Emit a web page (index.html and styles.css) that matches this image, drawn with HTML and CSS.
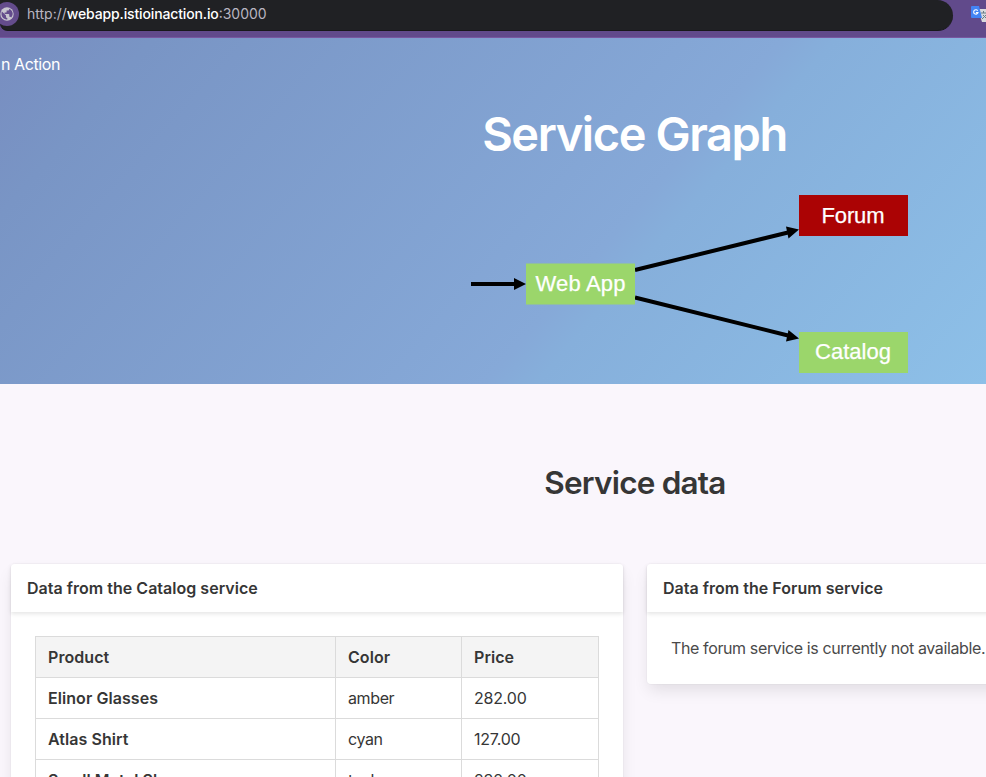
FILE: index.html
```html
<!DOCTYPE html>
<html lang="en">
<head>
<meta charset="utf-8">
<title>Istio in Action</title>
<link rel="stylesheet" href="styles.css">
</head>
<body>
<header class="browser">
  <div class="address">
    <svg class="globe" width="20" height="26" viewBox="0 0 20 26"><circle cx="7" cy="14" r="12" fill="#644c8c"/><circle cx="7" cy="14" r="6.7" fill="#c8c6d0"/><path d="M1.7 11.2 6 15.6v1.2c0 .7.6 1.3 1.3 1.3v1.5C4 19.500 1.500 17 1.500 14zM9.200 8.800v.4c0 .8-.6 1.400-1.300 1.400H6.600v1.300c0 .4-.3.700-.7.700H4.600V14h4c.4 0 .7.300.7.700v2h.6c.6 0 1.100.4 1.300.9 2.700-3.100 1.700-7.100-2-8.800z" fill="#644c8c"/></svg>
    <div class="url">http://<b>webapp.istioinaction.io</b>:30000</div>
  </div>
  <svg class="translate" width="15" height="18" viewBox="0 0 15 18"><path d="M7 4h9v13h-5z" fill="#d9dadd"/><path d="M10 8h6M12.500 6v2M11 14l5-5M12 10l4 4" stroke="#687d87" fill="none"/><path d="M1 1h7l3 12H1Q0 13 0 12V2Q0 1 1 1z" fill="#4384f4"/><path d="M6.700 5.700A2.200 2.200 0 1 0 7 7.600H4.900" stroke="#fff" stroke-width="1.100" fill="none"/></svg>
</header>
<section class="hero">
  <nav class="brand">n Action</nav>
  <h1 class="title">Service Graph</h1>
  <svg class="graph" width="986" height="200" viewBox="0 184 986 200">
    <g stroke="#000" stroke-width="4"><path d="M471 284H516M635 270 788 232.500M635 297.500 788 335.500"/></g>
    <path d="M514 278 526 284 514 290zM786 226.500 799 229.500 788.500 238.500zM788.500 330 799 338.500 786 341.500z"/>
    <path d="M526 263.500h109v41H526zM799 332h109v41H799z" fill="#9bd66b"/>
    <path d="M799 195h109v41H799z" fill="#ab0304"/>
    <g class="labels">
      <text x="535.500" y="291" textLength="90">Web App</text>
      <text x="821.500" y="222.500" textLength="63">Forum</text>
      <text x="815" y="359" textLength="76">Catalog</text>
    </g>
  </svg>
</section>
<main>
  <h2 class="subtitle">Service data</h2>
  <div class="columns">
    <article class="card catalog">
      <header class="card-head">Data from the Catalog service</header>
      <div class="content">
        <table>
          <colgroup><col class="c1"><col class="c2"><col class="c3"></colgroup>
          <thead><tr><th>Product</th><th>Color</th><th>Price</th></tr></thead>
          <tbody>
            <tr><th>Elinor Glasses</th><td>amber</td><td>282.00</td></tr>
            <tr><th>Atlas Shirt</th><td>cyan</td><td>127.00</td></tr>
            <tr><th>Small Metal Shoes</th><td>teal</td><td>232.00</td></tr>
          </tbody>
        </table>
      </div>
    </article>
    <article class="card forum">
      <header class="card-head">Data from the Forum service</header>
      <div class="content"><p>The forum service is currently not available.</p></div>
    </article>
  </div>
</main>
</body>
</html>
```
FILE: styles.css
```css
* { box-sizing: border-box; margin: 0; }
body { width: 986px; height: 777px; overflow: hidden; background: #faf6fc; color: #363636; font: 16px/24px Inter, "Liberation Sans", sans-serif; }
.browser { height: 38px; background: #614a8b; border-bottom: 1px solid #7857a0; display: flex; justify-content: space-between; }
.address { width: 953px; height: 31px; background: #202124; border-radius: 0 16px 16px 8px; display: flex; border-bottom: 1px solid #17181a; }
.globe { flex: none; }
.url { margin-left: 7px; line-height: 28px; font-size: 14px; color: #b9b5c1; white-space: nowrap; }
.url b { font-weight: 500; color: #fff; letter-spacing: -.14px; }
.translate { margin-top: 5px; flex: none; }
.hero { height: 346px; background: linear-gradient(131deg, #788dc0 0%, #7995c5 12%, #86a9d8 61%, #86afdb 65%, #8dc0e8 100%); color: #fff; }
.brand { height: 52px; padding: 14px 0 0 1px; letter-spacing: -.42px; }
.title { width: 1269px; height: 94px; text-align: center; font-size: 47px; line-height: 88px; font-weight: 600; letter-spacing: -1.42px; }
.graph { display: block; }
.labels { font-family: "Liberation Sans", Arial, sans-serif; font-size: 22px; fill: #fff; stroke: #fff; stroke-width: .25px; }
main { width: 1270px; padding-left: 11px; }
.subtitle { height: 180px; padding-top: 81px; font-size: 31.5px; line-height: 36px; font-weight: 600; text-align: center; letter-spacing: -.8px; margin-left: -11px; }
.columns { display: flex; gap: 24px; align-items: flex-start; }
.card { width: 612px; flex: none; background: #fff; border-radius: 4px; box-shadow: 0 8px 16px -2px rgba(10,10,10,.1), 0 0 0 1px rgba(10,10,10,.02); }
.card-head { height: 48px; padding: 12px 16px; font-weight: 600; letter-spacing: .02px; box-shadow: 0 2px 4px rgba(10,10,10,.1); }
.content { padding: 24px; color: #4a4a4a; letter-spacing: -.38px; }
.catalog { height: 380px; }
table { width: 563px; border-collapse: collapse; table-layout: fixed; color: #363636; }
.c1 { width: 300px; } .c2 { width: 126px; } .c3 { width: 137px; }
th, td { height: 41px; padding: 8px 12px; border: 1px solid #dbdbdb; text-align: left; line-height: 24px; }
td:last-child { letter-spacing: -.2px; }
th { font-weight: 600; letter-spacing: .06px; }
thead { background: #f4f4f4; }
```
